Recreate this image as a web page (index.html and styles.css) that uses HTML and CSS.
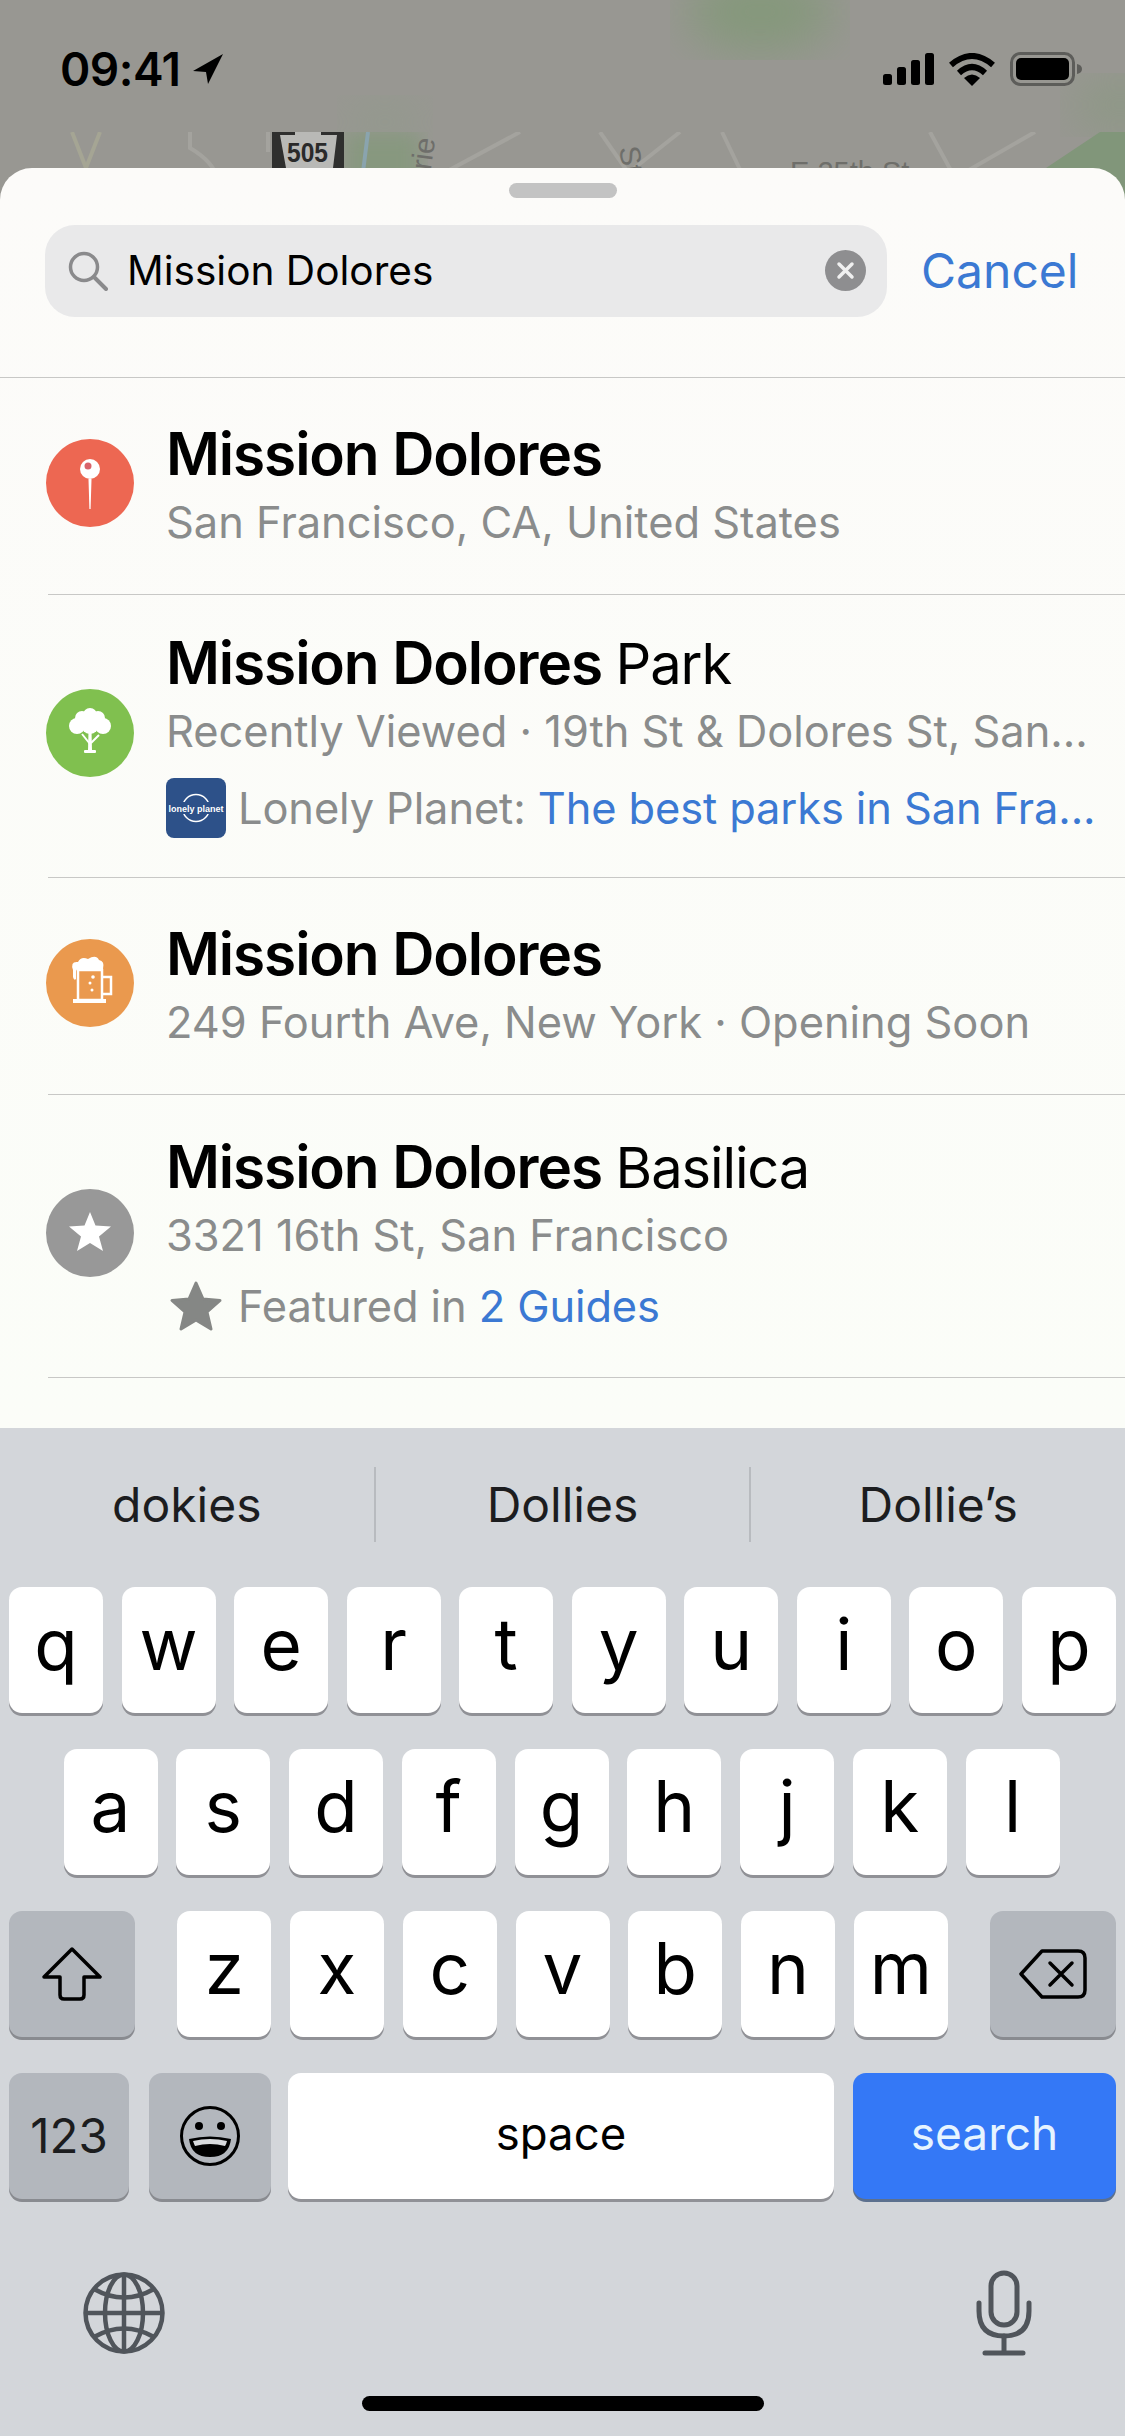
FILE: index.html
```html
<!DOCTYPE html>
<html lang="en">
<head>
  <meta charset="UTF-8" />
  <meta name="viewport" content="width=device-width, initial-scale=1.0"/>
  <title>Maps Search</title>
  <link rel="stylesheet" href="styles.css">
</head>
<body>
  <!-- Map behind the sheet -->
  <header class="map">
    <svg class="map-art" width="1125" height="200" viewBox="0 0 1125 200">
      <defs>
        <filter id="soft"><feGaussianBlur stdDeviation="24" /></filter>
        <filter id="softer"><feGaussianBlur stdDeviation="10" /></filter>
        <clipPath id="lower"><rect x="0" y="132" width="1125" height="68" /></clipPath>
      </defs>
      <rect width="1125" height="200" fill="#989792" />
      <ellipse cx="760" cy="12" rx="75" ry="40" fill="#84987a" filter="url(#soft)" />
      <ellipse cx="385" cy="122" rx="40" ry="22" fill="#929a8c" filter="url(#soft)" />
      <ellipse cx="1120" cy="105" rx="50" ry="26" fill="#8c9884" filter="url(#soft)" />
      <g clip-path="url(#lower)">
        <rect x="345" y="132" width="75" height="68" fill="#87987f" filter="url(#softer)" />
        <polygon points="1020,200 1040,172 1100,132 1125,132 1125,200" fill="#81967a" />
        <g fill="none" stroke="#a4a39e" stroke-width="4">
          <path d="M72 132 L86 168 L100 132" stroke="#a5a594" />
          <path d="M190 132 V148 Q214 162 218 180" />
          <path d="M268 132 V152" />
          <path d="M368 132 L362 180" stroke="#8aa4ae" />
          <path d="M440 175 L520 132" />
          <path d="M600 132 L632 178" />
          <path d="M632 170 L680 132" />
          <path d="M722 132 L745 180" />
          <path d="M930 132 L955 178 L1035 132" />
        </g>
        <rect x="272" y="132" width="72" height="68" fill="#2f2f2e" />
        <path d="M295 132 H321 V135 H337 L333 168 H286 L280 135 H295 Z" fill="#b9b9b6" />
        <text class="map-shield" x="287" y="162" textLength="41" lengthAdjust="spacingAndGlyphs">505</text>
        <text class="map-label" transform="translate(428 190) rotate(-82)">Erie</text>
        <text class="map-label" transform="translate(619 148) rotate(80)">St</text>
        <text class="map-label" x="790" y="182">E 25th St</text>
      </g>
    </svg>

    <div class="status-bar">
      <div class="clock">
        <span>09:41</span>
        <svg width="30" height="30" viewBox="0 0 30 30"><path d="M30 0 L0 17 L13 18 L15 30 Z" fill="#000" /></svg>
      </div>
      <div class="status-icons">
        <svg width="51" height="32" viewBox="0 0 51 32">
          <rect x="0" y="21" width="9" height="11" rx="2.5" />
          <rect x="14" y="14" width="9" height="18" rx="2.5" />
          <rect x="28" y="7" width="9" height="25" rx="2.5" />
          <rect x="42" y="0" width="9" height="32" rx="2.5" />
        </svg>
        <svg width="46" height="33" viewBox="0 0 46 33">
          <path d="M2 12 Q23 -6 44 12" fill="none" stroke="#000" stroke-width="6" />
          <path d="M10 20 Q23 8 36 20" fill="none" stroke="#000" stroke-width="6" />
          <path d="M15 25 Q23 18 31 25 L23 33 Z" fill="#000" />
        </svg>
        <svg width="72" height="34" viewBox="0 0 72 34">
          <rect x="1.5" y="1.5" width="62" height="31" rx="9" fill="none" stroke="#5d5d5a" stroke-width="3" />
          <rect x="6" y="6" width="53" height="22" rx="5" fill="#000" />
          <path d="M67 12 Q72 13 72 17 Q72 21 67 22 Z" fill="#5d5d5a" />
        </svg>
      </div>
    </div>
  </header>

  <main class="sheet">
    <div class="grabber"></div>

    <div class="search-row">
      <div class="search-box">
        <svg class="search-glass" width="40" height="40" viewBox="0 0 40 40" fill="none" stroke="#8a8a8c" stroke-width="3.5">
          <circle cx="16" cy="16" r="13.5" />
          <path d="M26 26 L38 38" stroke-linecap="round" stroke-width="4" />
        </svg>
        <span class="search-text">Mission Dolores</span>
        <svg class="search-clear" width="41" height="41" viewBox="0 0 41 41">
          <circle cx="20.5" cy="20.5" r="20.5" fill="#8e8e90" />
          <path d="M14 14 L27 27 M27 14 L14 27" stroke="#f0f0f0" stroke-width="3.5" stroke-linecap="round" />
        </svg>
      </div>
      <span class="cancel">Cancel</span>
    </div>

    <!-- Search results -->
    <ul class="results">
      <li class="result">
        <span class="badge badge-red">
          <svg width="88" height="88" viewBox="0 0 88 88">
            <path d="M42.5 40 H45.5 L44.6 70 H43.4 Z" fill="#fff" />
            <circle cx="44" cy="30" r="10" fill="#fff" />
            <circle cx="42" cy="27" r="3.5" fill="#d9636a" />
          </svg>
        </span>
        <div class="result-text">
          <h2 class="title">Mission Dolores</h2>
          <p class="sub">San Francisco, CA, United States</p>
        </div>
      </li>

      <li class="result result-park">
        <span class="badge badge-green">
          <svg width="88" height="88" viewBox="0 0 88 88" fill="#fff">
            <circle cx="44" cy="26" r="7" />
            <circle cx="36" cy="29" r="7" />
            <circle cx="52" cy="29" r="7" />
            <circle cx="31" cy="37" r="8" />
            <circle cx="57" cy="37" r="8" />
            <circle cx="44" cy="36" r="9" />
            <path d="M42.5 42 H45.5 L46 62 H42 Z" />
            <path d="M36 45 L44 55 M53 46 L45 54" stroke="#fff" stroke-width="2" fill="none" />
            <rect x="38" y="61" width="12" height="3" rx="1" />
          </svg>
        </span>
        <div class="result-text">
          <h2 class="title">Mission Dolores <span class="title-rest">Park</span></h2>
          <p class="sub">Recently Viewed · 19th St &amp; Dolores St, San...</p>
          <p class="sub sub-extra">
            <svg class="extra-icon" width="60" height="60" viewBox="0 0 60 60">
              <rect width="60" height="60" rx="8" fill="#2d5189" />
              <circle cx="30" cy="30" r="13.5" fill="none" stroke="#fff" stroke-width="1.5" />
              <rect x="3" y="24" width="54" height="12" fill="#2d5189" />
              <text class="lp-logo" x="30" y="33.5" text-anchor="middle">lonely planet</text>
            </svg>
            <span>Lonely Planet: <span class="link">The best parks in San Fra...</span></span>
          </p>
        </div>
      </li>

      <li class="result">
        <span class="badge badge-orange">
          <svg width="88" height="88" viewBox="0 0 88 88">
            <path d="M27 31 Q24 22 32 23 Q35 17 42 20 Q50 15 53 21 Q59 22 57 30 Q54 33 50 30 H33 Q30 30 30 33 V40 Q28 42 27 38 Z" fill="#fff" />
            <g fill="none" stroke="#fff" stroke-width="2.5">
              <rect x="32" y="31" width="24" height="30" />
              <path d="M56 38 H65 V55 H56" />
            </g>
            <rect x="27" y="60" width="33" height="4" fill="#fff" />
            <circle cx="47" cy="38" r="1.8" fill="#fff" />
            <circle cx="44" cy="44" r="1.5" fill="#fff" />
            <circle cx="46" cy="51" r="1.5" fill="#fff" />
          </svg>
        </span>
        <div class="result-text">
          <h2 class="title">Mission Dolores</h2>
          <p class="sub">249 Fourth Ave, New York · Opening Soon</p>
        </div>
      </li>

      <li class="result result-guides">
        <span class="badge badge-grey">
          <svg width="88" height="88" viewBox="0 0 88 88">
            <polygon points="44,23 49.5,36.5 65,37.5 53,47.5 57,62 44,54 31,62 35,47.5 23,37.5 38.5,36.5" fill="#fff" />
          </svg>
        </span>
        <div class="result-text">
          <h2 class="title">Mission Dolores <span class="title-rest">Basilica</span></h2>
          <p class="sub">3321 16th St, San Francisco</p>
          <p class="sub sub-extra">
            <svg class="extra-icon" width="60" height="60" viewBox="0 0 60 60">
              <polygon points="30,7 37,23 54,24.5 41,36 45,53 30,44 15,53 19,36 6,24.5 23,23" fill="#858785" stroke="#858785" stroke-width="3" stroke-linejoin="round" />
            </svg>
            <span>Featured in <span class="link">2 Guides</span></span>
          </p>
        </div>
      </li>
    </ul>
  </main>

  <!-- Keyboard -->
  <footer class="keyboard">
    <div class="suggestions">
      <span class="suggestion">dokies</span>
      <span class="suggestion">Dollies</span>
      <span class="suggestion">Dollie’s</span>
    </div>

    <div class="key-row">
      <span class="key">q</span><span class="key">w</span><span class="key">e</span><span class="key">r</span><span class="key">t</span>
      <span class="key">y</span><span class="key">u</span><span class="key">i</span><span class="key">o</span><span class="key">p</span>
    </div>
    <div class="key-row key-row-mid">
      <span class="key">a</span><span class="key">s</span><span class="key">d</span><span class="key">f</span><span class="key">g</span>
      <span class="key">h</span><span class="key">j</span><span class="key">k</span><span class="key">l</span>
    </div>
    <div class="key-row">
      <span class="key key-dark key-shift">
        <svg width="60" height="54" viewBox="0 0 60 54" fill="none" stroke="#000" stroke-width="3.5" stroke-linejoin="round">
          <path d="M30 2 L58 30 H42 V48 Q42 52 38 52 H22 Q18 52 18 48 V30 H2 Z" />
        </svg>
      </span>
      <div class="key-group">
        <span class="key">z</span><span class="key">x</span><span class="key">c</span><span class="key">v</span>
        <span class="key">b</span><span class="key">n</span><span class="key">m</span>
      </div>
      <span class="key key-dark key-shift">
        <svg width="68" height="50" viewBox="0 0 68 50" fill="none" stroke="#000" stroke-width="3.5" stroke-linejoin="round" stroke-linecap="round">
          <path d="M23 2 H59 Q66 2 66 9 V41 Q66 48 59 48 H23 L2 25 Z" />
          <path d="M31 14 L53 36 M53 14 L31 36" />
        </svg>
      </span>
    </div>
    <div class="key-row key-row-bottom">
      <span class="key key-dark key-num">123</span>
      <span class="key key-dark key-emoji">
        <svg width="62" height="62" viewBox="0 0 62 62">
          <circle cx="31" cy="31" r="28.5" fill="none" stroke="#000" stroke-width="3" />
          <circle cx="20" cy="21" r="4" />
          <circle cx="42" cy="21" r="4" />
          <path d="M10 34 Q31 29 52 34 Q50 52 31 52 Q12 52 10 34 Z" />
          <path d="M14 36 Q31 32 48 36 Q47 40 46 41 Q31 37 16 41 Q15 39 14 36 Z" fill="#d9dbde" />
        </svg>
      </span>
      <span class="key key-space">space</span>
      <span class="key key-search">search</span>
    </div>

    <div class="keyboard-tools">
      <svg width="82" height="82" viewBox="0 0 82 82" fill="none" stroke="#50555b" stroke-width="4.5">
        <circle cx="41" cy="41" r="38.5" />
        <ellipse cx="41" cy="41" rx="19" ry="38.5" />
        <path d="M41 3 V79 M3 41 H79" />
        <path d="M11 17 Q41 34 71 17 M11 65 Q41 48 71 65" />
      </svg>
      <svg width="56" height="86" viewBox="0 0 56 86" fill="none" stroke="#50555b" stroke-width="5" stroke-linecap="round">
        <rect x="15" y="3" width="26" height="52" rx="13" />
        <path d="M3 33 V41 Q3 66 28 66 Q53 66 53 41 V33" />
        <path d="M28 66 V83 M9 83 H47" />
      </svg>
    </div>
    <div class="home-indicator"></div>
  </footer>
</body>
</html>
```

FILE: styles.css
```css
* {
  box-sizing: border-box;
}

html, body {
  margin: 0;
  padding: 0;
}

body {
  width: 1125px;
  height: 2436px;
  overflow: hidden;
  display: flex;
  flex-direction: column;
  font-family: Inter, "Noto Sans", sans-serif;
  background-color: #fcfcfa;
  color: #000;
}

/* Map and status bar */
.map {
  position: relative;
  height: 200px;
  flex: none;
  overflow: hidden;
}

.map-art {
  position: absolute;
  top: 0;
  left: 0;
}

.map-shield {
  font-family: "Liberation Sans", sans-serif;
  font-size: 28px;
  font-weight: bold;
  fill: #2a2a2a;
}

.map-label {
  font-family: "Liberation Sans", sans-serif;
  font-size: 29px;
  fill: #6e6e6a;
}

.status-bar {
  position: relative;
  display: flex;
  justify-content: space-between;
  align-items: center;
  padding: 52px 43px 0 60px;
}

.clock {
  display: flex;
  align-items: center;
  gap: 12px;
  font-size: 46px;
  font-weight: 600;
  line-height: 34px;
  letter-spacing: -0.5px;
}

.status-icons {
  display: flex;
  align-items: center;
  gap: 15px;
}

/* Sheet */
.sheet {
  position: relative;
  flex: none;
  height: 1260px;
  margin-top: -32px;
  background: linear-gradient(#fcfbf9, #fbfdf8);
  border-radius: 32px 32px 0 0;
}

.grabber {
  width: 108px;
  height: 15px;
  margin: 0 auto;
  position: relative;
  top: 15px;
  background-color: #c3c3c3;
  border-radius: 8px;
}

.search-row {
  display: flex;
  align-items: center;
  height: 195px;
  padding: 42px 0 61px 45px;
  border-bottom: 1px solid #c8c8c6;
}

.search-box {
  display: flex;
  align-items: center;
  width: 842px;
  height: 92px;
  padding: 0 21px 0 23px;
  background-color: #e9e9ea;
  border-radius: 30px;
}

.search-glass {
  flex: none;
}

.search-text {
  flex: 1;
  margin-left: 19px;
  font-size: 40.6px;
}

.search-clear {
  flex: none;
}

.cancel {
  margin-left: 34px;
  font-size: 48px;
  color: #3b79d3;
}

.results {
  list-style: none;
  margin: 0;
  padding: 0;
}

.result {
  display: flex;
  align-items: center;
  height: 217px;
  margin-left: 48px;
  border-bottom: 1px solid #c8c8c6;
}

.result-park,
.result-guides {
  height: 283px;
}

.badge {
  flex: none;
  width: 88px;
  height: 88px;
  margin: -6px 32px 0 -2px;
  border-radius: 50%;
}

.badge svg {
  display: block;
}

.badge-red { background-color: #ed6752; }
.badge-green { background-color: #80c04f; }
.badge-orange { background-color: #ea994e; }
.badge-grey { background-color: #989898; }

.result-text {
  flex: 1;
  min-width: 0;
  align-self: flex-start;
  padding-top: 44px;
}

.result-park .result-text {
  padding-top: 36px;
}

.result-guides .result-text {
  padding-top: 40px;
}

.title {
  margin: 0;
  font-size: 58.5px;
  font-weight: 600;
  line-height: 64px;
  letter-spacing: -1.1px;
  white-space: nowrap;
}

.title-rest {
  font-size: 56px;
  font-weight: 400;
}

.sub {
  margin: 9px 0 0;
  font-size: 43.4px;
  line-height: 54px;
  color: #8a8c8c;
  white-space: nowrap;
}

.result-park .sub,
.result-guides .sub {
  margin-top: 8px;
}

.result-park .sub-extra {
  margin-top: 20px;
}

.result-guides .sub-extra {
  margin-top: 14px;
}

.sub-extra {
  display: flex;
  align-items: center;
  gap: 12px;
  height: 60px;
  letter-spacing: -0.1px;
}

.extra-icon {
  flex: none;
}

.lp-logo {
  font-family: "Liberation Sans", sans-serif;
  font-size: 9px;
  font-weight: bold;
  letter-spacing: 0;
  fill: #fff;
}

.link {
  color: #3b79d3;
}

/* Keyboard */
.keyboard {
  flex: 1;
  background-color: #d3d6da;
  padding: 0 9px;
}

.suggestions {
  display: flex;
  height: 159px;
  padding-top: 39px;
  padding-bottom: 45px;
  margin: 0 -9px;
}

.suggestion {
  display: flex;
  align-items: center;
  justify-content: center;
  flex: 1;
  font-size: 48px;
  color: #1c1d1f;
  border-right: 2px solid #b8bbbf;
}

.suggestion:last-child {
  border-right: none;
}

.key-row {
  display: flex;
  justify-content: space-between;
  margin-bottom: 36px;
}

.key-row-mid {
  justify-content: center;
  gap: 18.75px;
  padding-right: 2px;
}

.key-group {
  display: flex;
  gap: 18.75px;
}

.key {
  display: flex;
  align-items: center;
  justify-content: center;
  width: 94px;
  height: 126px;
  padding-bottom: 12px;
  font-size: 71px;
  background-color: #fff;
  border-radius: 13px;
  box-shadow: 0 3px 0 #909196;
}

.key-dark {
  background-color: #b3b7bd;
  box-shadow: 0 3px 0 #898b90;
  padding-bottom: 0;
}

.key-shift {
  width: 126px;
}

.key-row-bottom {
  justify-content: flex-start;
}

.key-num {
  width: 120px;
  margin-right: 20px;
  padding-bottom: 2px;
  font-size: 47.5px;
  color: #1c1d1f;
}

.key-emoji {
  width: 122px;
  margin-right: 17px;
}

.key-space {
  width: 546px;
  margin-right: 19px;
  padding-bottom: 6px;
  font-size: 45.5px;
}

.key-search {
  width: 263px;
  padding-bottom: 6px;
  font-size: 46px;
  color: #e6f4ff;
  background-color: #3478f6;
  box-shadow: 0 3px 0 #5c708e;
}

.keyboard-tools {
  display: flex;
  justify-content: space-between;
  align-items: center;
  padding: 35px 84px 0 74px;
}

.home-indicator {
  width: 402px;
  height: 15px;
  margin: 40px auto 0;
  background-color: #000;
  border-radius: 8px;
}
```
